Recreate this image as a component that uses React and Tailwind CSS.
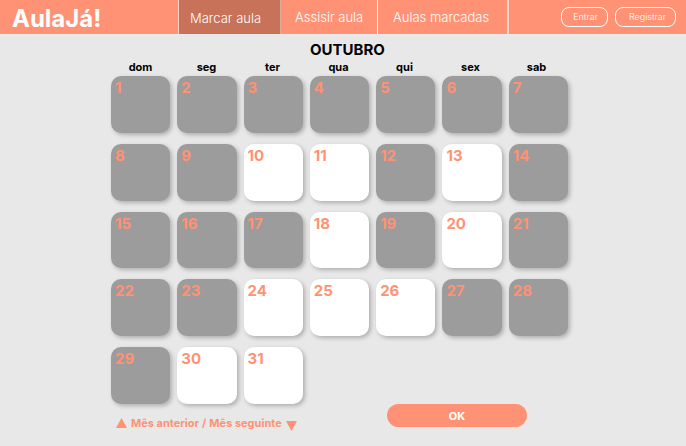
const weekdays = ["dom", "seg", "ter", "qua", "qui", "sex", "sab"];
const days = Array.from({ length: 31 }, (_, i) => i + 1);
const available = [10, 11, 13, 18, 20, 24, 25, 26, 30, 31];

function Triangle({ down = false }) {
  return (
    <svg
      aria-hidden="true"
      viewBox="0 0 11 10"
      className={down ? "mt-[5px] h-[10px] w-[11px]" : "h-[10px] w-[11px]"}
    >
      <path d={down ? "M0 0H11L5.5 10Z" : "M0 10H11L5.5 0Z"} fill="currentColor" />
    </svg>
  );
}

function Header() {
  return (
    <header className="flex h-[34px] items-stretch bg-[#ff9274] text-white">
      <a href="#" className="flex w-[178px] items-center pt-1 pl-3 text-[24px] leading-none font-bold">
        AulaJá!
      </a>
      <nav className="flex border-r-2 border-l border-[#ffd3c7] text-[13px] font-light whitespace-nowrap">
        <a
          href="#"
          aria-current="page"
          className="flex w-[102px] items-center border-r border-[#e0a898] bg-[#c87259] pt-1 pl-[11px]"
        >
          Marcar aula
        </a>
        <a href="#" className="flex w-[97px] items-center border-r border-white pt-px pl-[14px]">
          Assisir aula
        </a>
        <a href="#" className="flex w-[129px] items-center pt-px pl-[15px]">
          Aulas marcadas
        </a>
      </nav>
      <div className="ml-auto flex items-center gap-[7px] pr-[10px] text-[9px] font-light">
        <button type="button" className="h-5 w-[47px] rounded-lg border border-white pl-[2px]">
          Entrar
        </button>
        <button type="button" className="h-5 w-[61px] rounded-lg border border-white pl-1">
          Registrar
        </button>
      </div>
    </header>
  );
}

function Day({ day }) {
  const free = available.includes(day);
  return (
    <button
      type="button"
      disabled={!free}
      className={`flex items-start rounded-[10px] pt-[3px] pl-1 text-[15px] leading-[18px] font-bold text-[#ff9274] shadow-[2px_2px_4px_rgba(0,0,0,0.25)] ${
        free ? "bg-white" : "bg-[#9c9c9c]"
      }`}
    >
      {day}
    </button>
  );
}

export default function App() {
  return (
    <div className="min-h-screen bg-[#e8e8e8] font-['Inter',sans-serif]">
      <Header />
      <main className="pt-[6px] pr-[7px]">
        <div className="mx-auto max-w-[457px]">
          <h1 className="pl-4 text-center text-[15px] leading-5 font-bold text-black">OUTUBRO</h1>
          <div className="grid grid-cols-7 gap-x-[7px] pr-[2px] pb-[2px] text-center text-[11px] leading-[14px] font-bold text-black">
            {weekdays.map((name) => (
              <span key={name}>{name}</span>
            ))}
          </div>
          <div className="grid h-[328px] grid-cols-7 grid-rows-5 gap-x-[7px] gap-y-[11px]">
            {days.map((day) => (
              <Day key={day} day={day} />
            ))}
          </div>
          <div className="flex items-start justify-between pr-[41px] pl-[5px]">
            <div className="flex items-center gap-[3px] pt-[11px] text-[11px] leading-4 font-bold whitespace-nowrap text-[#ff9274]">
              <button type="button" className="flex items-center gap-1">
                <Triangle />
                Mês anterior
              </button>
              <span>/</span>
              <button type="button" className="flex items-center gap-1">
                Mês seguinte
                <Triangle down />
              </button>
            </div>
            <button
              type="button"
              className="h-[23px] w-[140px] rounded-full bg-[#ff9274] pt-px text-[11px] font-bold text-white"
            >
              OK
            </button>
          </div>
        </div>
      </main>
    </div>
  );
}
